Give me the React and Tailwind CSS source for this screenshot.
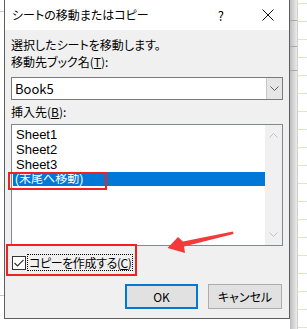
import { Fragment } from "react";

const font = { fontFamily: '"Noto Sans CJK JP", "Liberation Sans", sans-serif' };

function Chevron({ up, color = "#606060" }) {
  return (
    <svg width="9" height="5" viewBox="0 0 9 5">
      <path
        d={up ? "M0.5 4.5 L4.5 0.5 L8.5 4.5" : "M0.5 0.5 L4.5 4.5 L8.5 0.5"}
        fill="none"
        stroke={color}
        strokeWidth="1"
      />
    </svg>
  );
}

function GreenLines({ count }) {
  return (
    <div className="flex flex-col pt-[3px]">
      {Array.from({ length: count }).map((_, i) => (
        <div key={i} className="h-[18px] border-t border-[#d4efb4]" />
      ))}
    </div>
  );
}

export default function App() {
  const sheets = ["Sheet1", "Sheet2", "Sheet3"];

  return (
    <div
      className="relative w-[307px] h-[329px] overflow-hidden bg-white text-[12px] text-black [font-feature-settings:'palt']"
      style={font}
    >
      <div className="flex">
        {/* left edge of the sheet behind */}
        <div className="w-[4px] h-[319px] flex flex-col">
          <div className="h-[12px] border-b border-[#c8c8c8]" />
          <div className="h-[284px] border-b border-[#c8c8c8]" />
        </div>

        {/* dialog */}
        <div className="w-[286px] h-[319px] flex flex-col border-x border-b border-[#5e5e5e] bg-[#f0f0f0]">
          <div className="h-[30px] bg-white flex items-center pl-[7px] pr-[15px]">
            <span className="flex-1 leading-none">シートの移動またはコピー</span>
            <span className="mr-[38px] text-[13px] leading-none">?</span>
            <svg width="12" height="12" viewBox="0 0 12 12">
              <path d="M0.5 0.5 L11.5 11.5 M11.5 0.5 L0.5 11.5" stroke="#111" strokeWidth="1" />
            </svg>
          </div>

          <div className="flex flex-col px-[6px] pt-[6px]">
            <div className="leading-[17px]">選択したシートを移動します。</div>
            <div className="leading-[17px]">
              移動先ブック名(<span className="underline">T</span>):
            </div>

            <div className="mt-[7px] h-[23px] w-[272px] flex border border-[#7a7a7a] bg-white">
              <div className="flex-1 flex items-center pl-[3px] text-[13px]">Book5</div>
              <div className="w-[16px] flex items-center justify-center bg-[#e6e6e6] border-l border-[#c8c8c8]">
                <Chevron />
              </div>
            </div>

            <div className="mt-[3px] leading-[17px]">
              挿入先(<span className="underline">B</span>):
            </div>

            <div className="mt-[4px] h-[122px] w-[272px] flex border border-[#828790] bg-white">
              <div className="flex-1 flex flex-col pt-[2px] pl-[1px] text-[13px] font-['Liberation_Sans','Noto_Sans_CJK_JP',sans-serif]">
                {sheets.map((s) => (
                  <div key={s} className="h-[15px] leading-[15px] pl-[3px]">
                    {s}
                  </div>
                ))}
                <div className="relative h-[14px] leading-[14px] pl-[2px] bg-[#0078d7] text-white text-[12px]">
                  (末尾へ移動)
                  <span className="absolute left-[-5px] top-0 w-[99px] h-[18px] border-2 border-[#ee2222]" />
                </div>
              </div>
              <div className="w-[17px] flex flex-col items-center justify-between py-[8px] bg-[#f0f0f0]">
                <Chevron up color="#c2c2c2" />
                <Chevron color="#c2c2c2" />
              </div>
            </div>

            <div className="relative mt-[8px] h-[17px] flex items-center pl-[1px]">
              <div className="w-[14px] h-[14px] border border-[#333] bg-white flex items-center justify-center">
                <svg width="10" height="8" viewBox="0 0 10 8">
                  <path d="M0.5 4 L3.5 7 L9.5 0.8" fill="none" stroke="#333" strokeWidth="1.2" />
                </svg>
              </div>
              <div className="ml-[1px] h-[17px] px-[1px] flex items-center border border-dotted border-black leading-none tracking-[-0.4px]">
                コピーを作成する(<span className="underline">C</span>)
              </div>
              <span className="absolute left-[-5px] top-[-10px] w-[131px] h-[32px] border-2 border-[#ee2222]" />
            </div>

            <div className="mt-[13px] flex justify-end gap-[10px] pr-[1px]">
              <button className="w-[73px] h-[25px] border-2 border-[#0078d7] bg-[#e1e1e1] leading-none">
                OK
              </button>
              <button className="w-[74px] h-[25px] border border-[#adadad] bg-[#e1e1e1] leading-none">
                キャンセル
              </button>
            </div>
          </div>
        </div>

        {/* right edge: shadow + sheet grid */}
        <div className="flex">
          <div className="w-[7px] h-[329px] bg-gradient-to-r from-[#bdbdbd] to-[#ececec] flex flex-col">
            <div className="h-[21px] border-b border-[#a8a8a8]" />
            <div className="h-[26px] border-b border-[#a8a8a8]" />
            <div className="h-[24px] border-b border-[#a8a8a8]" />
          </div>
          <div className="w-[10px] border-l border-[#d0d0d0]">
            <GreenLines count={19} />
          </div>
        </div>
      </div>

      {/* bottom edge */}
      <div className="flex h-[10px] w-[290px] bg-gradient-to-b from-[#d8d8d8] to-[#f6f6f6] border-b border-[#d4efb4]">
        <div className="w-[27px] border-r border-[#c0c0c0]" />
        <div className="w-[144px] border-r border-[#c0c0c0]" />
      </div>

      {/* red arrow annotation */}
      <svg className="absolute left-0 top-0" width="307" height="329" viewBox="0 0 307 329">
        <polygon
          points="233,231.5 183,241.5 178,237 167.5,248 185,253 184,246.5 233.5,234"
          fill="#f23a3a"
        />
      </svg>
    </div>
  );
}
